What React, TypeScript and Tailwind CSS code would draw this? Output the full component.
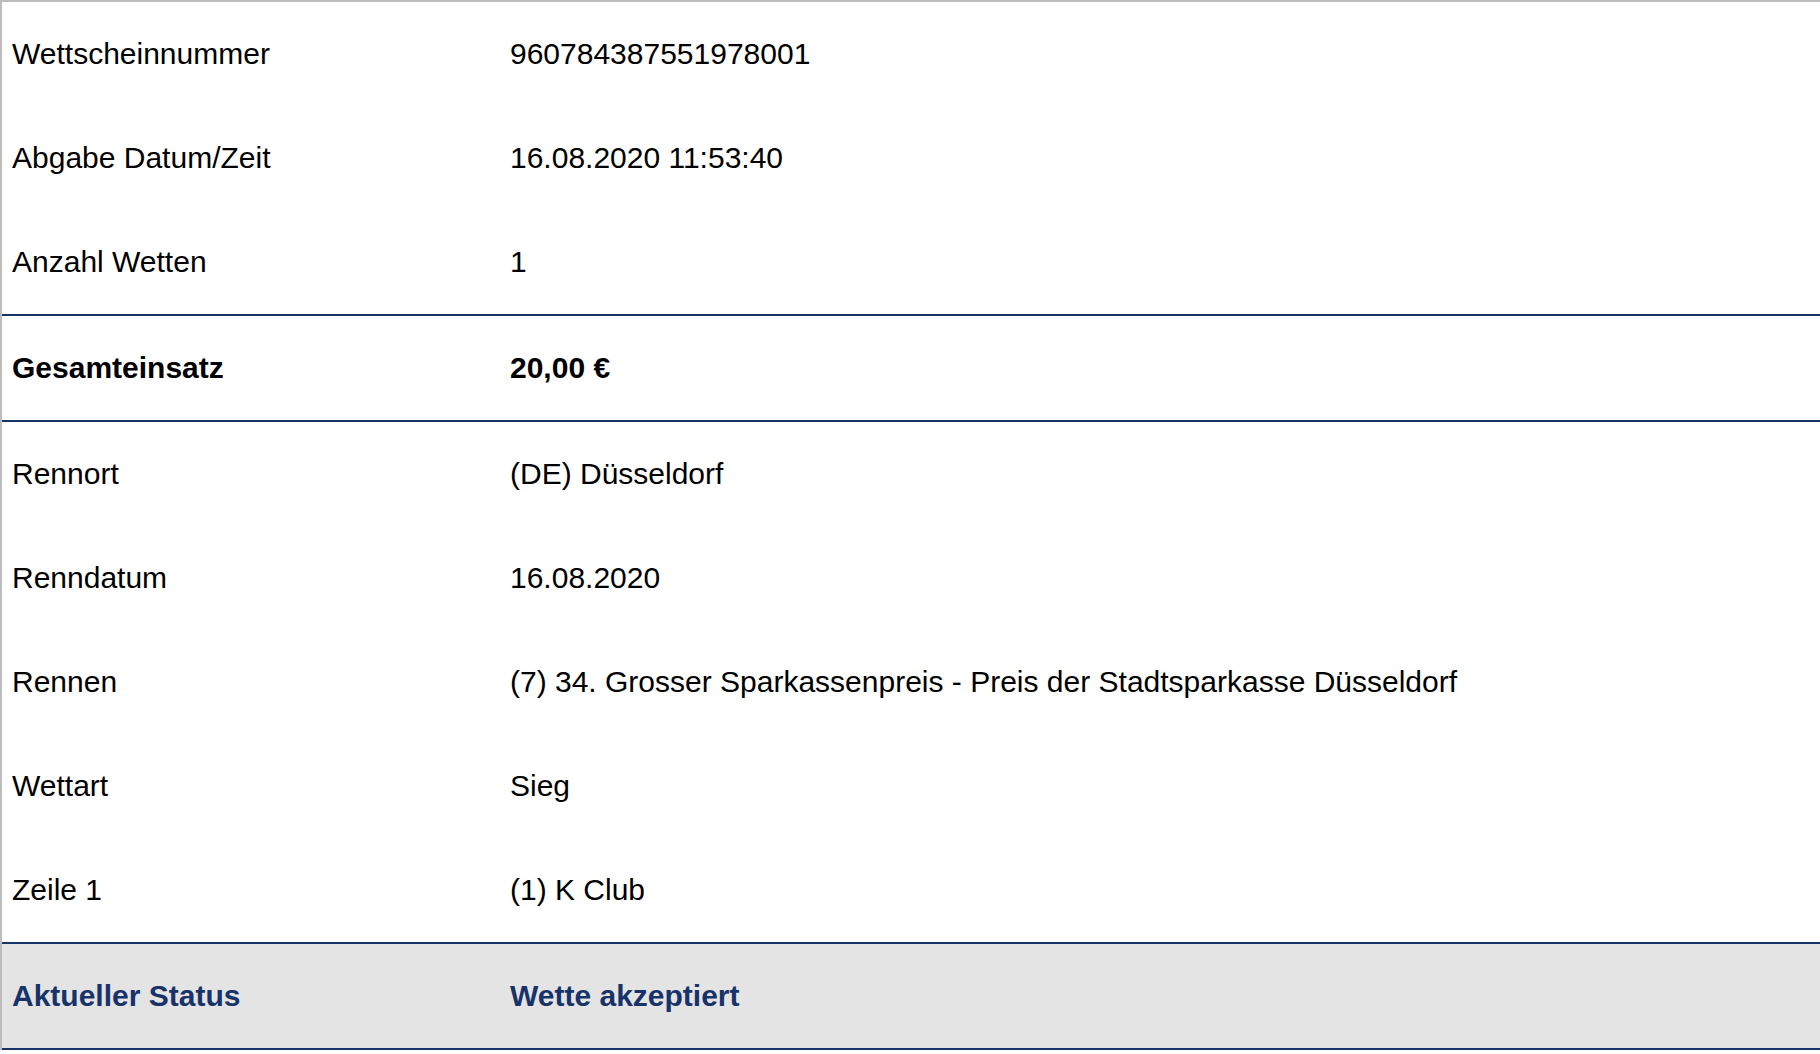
import React from 'react';

type Row = { label: string; value: string };

const head: Row[] = [
  { label: 'Wettscheinnummer', value: '960784387551978001' },
  { label: 'Abgabe Datum/Zeit', value: '16.08.2020 11:53:40' },
  { label: 'Anzahl Wetten', value: '1' },
];

const details: Row[] = [
  { label: 'Rennort', value: '(DE) Düsseldorf' },
  { label: 'Renndatum', value: '16.08.2020' },
  { label: 'Rennen', value: '(7) 34. Grosser Sparkassenpreis - Preis der Stadtsparkasse Düsseldorf' },
  { label: 'Wettart', value: 'Sieg' },
  { label: 'Zeile 1', value: '(1) K Club' },
];

function Line({ label, value, className = '' }: Row & { className?: string }) {
  return (
    <div className={`grid grid-cols-[498px_1fr] h-[104px] items-center ${className}`}>
      <div className="pl-[10px]">{label}</div>
      <div className="pl-[10px]">{value}</div>
    </div>
  );
}

export default function App() {
  return (
    <div
      className="w-full min-h-screen bg-white text-black text-[30px] leading-none"
      style={{ fontFamily: '"Liberation Sans", Arial, sans-serif' }}
    >
      <div className="border-l-2 border-t-2 border-[#bcbcbc]">
        {head.map((r) => (
          <Line key={r.label} {...r} />
        ))}
      </div>
      <div className="border-l-2 border-[#bcbcbc]">
        <div className="h-[2px] bg-[#17336a]" />
        <Line label="Gesamteinsatz" value="20,00 €" className="font-bold" />
        <div className="h-[2px] bg-[#17336a]" />
        {details.map((r) => (
          <Line key={r.label} {...r} />
        ))}
        <div className="h-[2px] bg-[#17336a]" />
        <Line
          label="Aktueller Status"
          value="Wette akzeptiert"
          className="font-bold text-[#17336a] bg-[#e4e4e4]"
        />
        <div className="h-[2px] bg-[#17336a]" />
      </div>
    </div>
  );
}
